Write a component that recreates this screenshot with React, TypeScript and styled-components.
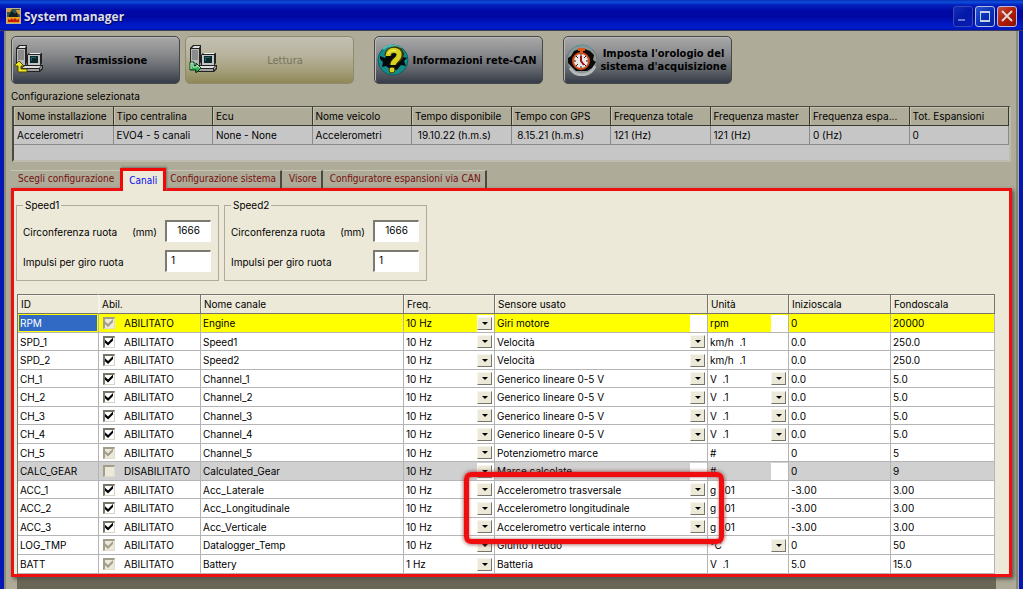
import React from 'react';
import styled, { createGlobalStyle, css } from 'styled-components';

const ui = `Inter, 'Liberation Sans', sans-serif`;
const condensed = `'DejaVu Sans Condensed', 'DejaVu Sans', sans-serif`;

const GlobalStyle = createGlobalStyle`
  * { box-sizing: border-box; }
  body { margin: 0; background: #0a1cae; color: #000; font: 10px/14px ${ui}; }
  button, input, select { font: inherit; color: inherit; margin: 0; }
`;

const Window = styled.main`
  min-height: 100vh;
  display: flex;
  flex-direction: column;
  background: #aeab98;
  border: solid #0318b4;
  border-width: 0 4px;
`;

const TitleBar = styled.header`
  display: flex;
  align-items: center;
  gap: 3px;
  height: 31px;
  margin: 0 -4px;
  padding: 2px 6px 0 6px;
  border-bottom: 1px solid #3b3d5e;
  background: linear-gradient(#0a2cb4 0, #0c50dc 2px, #0420bc 5px, #0008a4 11px, #0008a4 17px, #0018c4 24px, #001cc8 28px, #0010a0 31px);
`;

const Title = styled.h1`
  flex: 1;
  margin: 0;
  padding-top: 2px;
  color: #dcdcec;
  font: bold 12px/18px 'Open Sans', 'Noto Sans', sans-serif;
  text-shadow: 1px 1px 0 #000850;
`;

const Controls = styled.div`
  display: flex;
  gap: 2px;
`;

const ControlButton = styled.button<{ $kind: 'min' | 'max' | 'close' }>`
  display: grid;
  place-items: center;
  width: 20px;
  height: 21px;
  padding: 0;
  border: 1px solid ${p => (p.$kind === 'min' ? '#3848b8' : '#b4bce0')};
  border-radius: 3px;
  background: ${p =>
    p.$kind === 'close'
      ? 'linear-gradient(135deg, #c85038, #b01c08 50%, #901000)'
      : p.$kind === 'max'
        ? 'linear-gradient(135deg, #2c58d0, #0830b8 50%, #0420a0)'
        : 'linear-gradient(135deg, #1030b8, #0418a8 50%, #0820b0)'};
`;

const Client = styled.div`
  flex: 1;
  display: flex;
  flex-direction: column;
  margin-right: 1px;
  padding: 5px 4px 0 5px;
  border: solid #8b8978;
  border-width: 0 2px;
`;

const Toolbar = styled.div`
  display: flex;
  gap: 20px;
`;

const ToolPair = styled.div`
  display: flex;
  gap: 5px;
`;

const ToolButton = styled.button`
  display: flex;
  align-items: center;
  width: 169px;
  height: 48px;
  padding: 0 2px;
  border: 1px solid #46474a;
  border-radius: 5px;
  background: linear-gradient(#a9a9a9, #8b8c8e 35%, #62666c 70%, #363c48);
  font: bold 11px/13px ${condensed};
  box-shadow: inset 1px 1px 0 #b9b9b6;

  &:disabled {
    color: #77735f;
    font-weight: normal;
    border-color: #8f8b6e;
    background: linear-gradient(#c3c0b2, #b7b39c 40%, #a39d78 75%, #8f8857);
    box-shadow: none;
  }
`;

const ToolLabel = styled.span`
  flex: 1;
  text-align: center;
`;

const Caption = styled.h2`
  margin: 5px 0 3px;
  font: 10px/14px ${ui};
`;

const SummaryBox = styled.div`
  height: 56px;
  margin: 0 1px;
  border: solid #4a4a40;
  border-width: 1px 0 0 2px;
  border-right: 2px solid #bdbbae;
  border-bottom: 2px solid #bdbbae;
  background: #c6c6c6;
`;

const SummaryTable = styled.table`
  width: 100%;
  table-layout: fixed;
  border-spacing: 0;

  th, td {
    height: 19px;
    padding: 0 0 0 3px;
    font-weight: normal;
    text-align: left;
    white-space: pre;
    border-right: 1px solid #8a8a8a;
    border-bottom: 1px solid #8a8a8a;
  }
  th {
    background: #aeab98;
    border-color: #38382f;
    box-shadow: inset 1px 1px 0 #c4c2b2;
  }
`;

const Tabs = styled.div`
  display: flex;
  align-items: flex-end;
  height: 26px;
  font: 10px/14px ${condensed};
`;

const Tab = styled.button<{ $divider?: boolean }>`
  height: 18px;
  padding: 0 4px 2px 7px;
  border: 0;
  border-top: 1px solid #c8c6b6;
  border-right: ${p => (p.$divider ? '2px solid #4c4a40' : '0')};
  background: none;
  color: #761010;
  white-space: nowrap;

  &:first-child { padding-right: 6px; }
  &[aria-selected='true'] {
    position: relative;
    height: 23px;
    margin: 0 0 -3px;
    padding: 0 6px;
    border: solid #f00808;
    border-width: 3px 3px 0;
    background: #ece9d8;
    color: #0a0af0;
    box-shadow: 1px -1px 2px #77756a;
    clip-path: inset(-4px -4px 0 -4px);
  }
  &[aria-selected='true'] + & { padding-left: 4px; }
`;

const Panel = styled.section`
  padding: 7px 14px 0 3px;
  border: 3px solid #ee1010;
  background: #ece9d8;
  box-shadow: 2px 2px 4px #55534a;
`;

const SpeedRow = styled.div`
  display: flex;
  gap: 5px;
  margin: 0 0 13px -1px;
`;

const SpeedGroup = styled.fieldset`
  width: 203px;
  margin: 0;
  padding: 8px 7px 8px 6px;
  border: 1px solid #aeac9e;

  legend {
    padding: 0 2px;
    line-height: 14px;
  }
`;

const Field = styled.label`
  display: flex;
  align-items: center;
  height: 22px;

  & + & { margin-top: 8px; }
`;

const FieldText = styled.span<{ $grow?: boolean }>`
  flex: ${p => (p.$grow ? 1 : 'none')};
  padding-top: 2px;
`;

const NumberBox = styled.input<{ $center?: boolean }>`
  width: 46px;
  height: 22px;
  margin-left: 8px;
  padding: 0 4px 3px;
  border: solid;
  border-width: 2px 1px 1px 2px;
  border-color: #7c7a70 #fff #fff #7c7a70;
  border-radius: 0;
  background: #fff;
  text-align: ${p => (p.$center ? 'center' : 'left')};
  outline: none;
`;

type Tint = 'yellow' | 'grey' | undefined;
const tintColor = (t: Tint) => (t === 'yellow' ? '#ffff00' : t === 'grey' ? '#d0d0d0' : '#fff');

const ChannelTable = styled.table`
  width: 100%;
  table-layout: fixed;
  border-spacing: 0;
  border-left: 1px solid #77756a;

  th {
    height: 20px;
    padding: 0 0 0 3px;
    font-weight: normal;
    text-align: left;
    background: #ece9d8;
    border: solid #77756a;
    border-width: 1px 1px 1px 0;
    box-shadow: inset 1px 1px 0 #f6f4ea;
  }
  th:first-child {
    border-right-color: #f4f2e8;
  }
`;

const Row = styled.tr<{ $tint: Tint }>`
  height: 18px;
  &:nth-child(odd), &:last-child { height: 19px; }

  td {
    height: inherit;
    padding: 0;
    line-height: 14px;
    white-space: pre;
    background: ${p => tintColor(p.$tint)};
    border: solid #b4b4b4;
    border-width: 0 1px 1px 0;
  }
`;

const Text = styled.div<{ $selected?: boolean }>`
  padding: 0 0 0 2px;
  ${p =>
    p.$selected &&
    css`
      margin: 0 1px;
      padding: 1px 0 1px 1px;
      background: #316ac5;
      color: #fff;
    `}
`;

const Enable = styled.label`
  display: flex;
  align-items: center;
  gap: 9px;
  padding: 0 0 0 4px;
`;

const Check = styled.input`
  appearance: none;
  width: 12px;
  height: 12px;
  border: solid;
  border-width: 2px 1px 1px 2px;
  border-color: #77756a #d8d5c4 #d8d5c4 #77756a;
  background: #fff;
  color: #000;

  &:disabled {
    background: #ece9d8;
    color: #a19e8c;
    border-color: #a19e8c #e0ddcc #e0ddcc #a19e8c;
  }
  &:checked::after {
    content: '';
    display: block;
    width: 8px;
    height: 8px;
    background: currentColor;
    clip-path: polygon(0 28%, 38% 62%, 100% 0, 100% 38%, 38% 100%, 0 66%);
  }
`;

const Split = styled.div`
  display: grid;
  grid-template-columns: 1fr 17px;
  align-items: center;
  height: 100%;
`;

const Picker = styled.select`
  grid-area: 1 / 1 / 2 / 3;
  appearance: none;
  width: 100%;
  height: 14px;
  padding: 0 17px 0 2px;
  border: 0;
  background: none;
  outline: none;
`;

const Tail = styled.span`
  grid-area: 1 / 2 / 2 / 3;
  display: grid;
  place-items: center start;
  height: 17px;
  background: #fff;
  pointer-events: none;
`;

const Arrow = styled.span`
  display: grid;
  place-items: center;
  width: 15px;
  height: 13px;
  background: #ece9d8;
  border: solid;
  border-width: 1px;
  border-color: #f8f6ec #77756a #77756a #f8f6ec;

  &::after {
    content: '';
    border: solid transparent;
    border-width: 3px 3px 0;
    border-top-color: #000;
  }
`;

const SensorAnchor = styled.div`
  position: relative;
  height: 100%;
`;

const Highlight = styled.div`
  position: absolute;
  z-index: 2;
  top: -9px;
  left: -31px;
  right: -17px;
  height: 72px;
  border: 5px solid #f00d10;
  border-radius: 7px;
  box-shadow: 0 0 4px #8a3030, inset 0 0 3px #a06060;
  pointer-events: none;
`;

const Desktop = styled.div`
  flex: 1;
  min-height: 13px;
  margin: 0 16px 0 6px;
  background: linear-gradient(#55534a, #6a6655 5px);
`;

function AppIcon() {
  return (
    <svg width="15" height="16" viewBox="0 0 15 16" aria-hidden="true">
      <rect width="15" height="16" fill="#b8b090" />
      <rect x="1" y="1" width="13" height="9" fill="#31544c" />
      <path d="M1 1h5l-2 3H1zM10 2h4v5l-3-2z" fill="#d89c30" />
      <path d="M3 7l3-4 3 3 2-2 1 5H3z" fill="#151d20" />
      <rect x="1" y="9" width="13" height="6" fill="#e8a020" />
      <path d="M2 14V11l2 1 2-2 1 2 2-2 2 2 2-1v3z" fill="#c81808" />
    </svg>
  );
}

function ComputerIcon({ down }: { down?: boolean }) {
  return (
    <svg width="31" height="32" viewBox="0 0 31 32" aria-hidden="true">
      <path d="M2 4l3-3h8v17l-2 4H2z" fill="#222" />
      <path d="M3 5h8v16H3z" fill="#b8b8b8" />
      <path d="M4 4l2-2h6l-1 2z" fill="#e0e0e0" />
      <path d="M4 6h6v10H4z" fill="#8b8b8b" />
      <path d="M13 11l2-2h13v10l-2 3H13z" fill="#222" />
      <path d="M14 11h12v10H14z" fill="#c4c4c4" />
      <path d="M15 10h11l1-1h-11z" fill="#eee" />
      <path d="M16 12h8v7h-8z" fill="#0a2a2c" />
      <path d="M17 13h5v1h-4v3h-1z" fill="#1d6265" />
      <path d="M7 24l4-3h18v4l-3 3H7z" fill="#222" />
      <path d="M8 24l3-2h16l-2 2z" fill="#ddd" />
      <path d="M8 25h17v2H8zM26 24l2-2v2l-2 2z" fill="#a0a0a0" />
      {down ? (
        <>
          <path d="M2 18h4v4h2v-3l5 5-5 5v-3H2z" fill="#30b050" stroke="#0c3818" />
          <path d="M3 25v-6h2v4h4v-2l3 3" fill="none" stroke="#c8f0d0" />
        </>
      ) : (
        <path d="M5 17l5 5H7v3h6v3H4v-6H0z" fill="#f0e820" stroke="#4c4808" />
      )}
    </svg>
  );
}

function HelpIcon() {
  return (
    <svg width="32" height="32" viewBox="0 0 32 32" aria-hidden="true">
      <circle cx="16" cy="16" r="15" fill="#128c8c" stroke="#0d5e60" />
      <path d="M3 12l5 2 3-6 9-2 7 3-1 4 4 1-3 3 2 5-5-1-4 5-7-1-4-3-4 1 1-5-3-3z" fill="#050808" />
      <path d="M6 5a15 15 0 0 1 18-1" stroke="#50b8b0" strokeWidth="2" fill="none" />
      <path d="M11 12c0-8 13-8 12-1 0 5-7 5-7 10" stroke="#3c3804" strokeWidth="7" fill="none" />
      <path d="M11 12c0-8 12-7 11-1 0 5-6 5-6 10" stroke="#d8d020" strokeWidth="5" fill="none" />
      <path d="M11 10c1-4 6-4 8-3" stroke="#f4f080" strokeWidth="1" fill="none" />
      <circle cx="15" cy="26" r="3" fill="#d8d020" stroke="#3c3804" />
    </svg>
  );
}

function ClockIcon() {
  return (
    <svg width="32" height="32" viewBox="0 0 32 32" aria-hidden="true">
      <circle cx="16" cy="16" r="15" fill="#8c9496" stroke="#68787a" />
      <path d="M5 6a15 15 0 0 1 21-1" stroke="#57a09c" fill="none" />
      <path d="M4 24a14 14 0 0 0 25-2" stroke="#b4b8b8" strokeWidth="3" fill="none" />
      <path d="M2 14l3-2 3-5 8-3 8 3 4 4-1 5 3 2-4 6-5 3H10l-4-4-4-4z" fill="#0a0808" />
      <path d="M12 4h7v3h-7zM14 7h3v3h-3z" fill="#e05818" />
      <circle cx="15" cy="17" r="8" fill="#e8e8e8" stroke="#d84c18" strokeWidth="2" />
      <path d="M15 10v2M15 22v2M8 17h2M20 17h2M10 12l2 2M20 12l-2 2M10 22l2-2M20 22l-2-2" stroke="#222" />
      <path d="M15 12v5l3 4" stroke="#a01010" strokeWidth="2" fill="none" />
    </svg>
  );
}

const summary: [string, string][] = [
  ['Nome installazione', 'Accelerometri'],
  ['Tipo centralina', 'EVO4 - 5 canali'],
  ['Ecu', 'None - None'],
  ['Nome veicolo', 'Accelerometri'],
  ['Tempo disponibile', ' 19.10.22 (h.m.s)'],
  ['Tempo con GPS', ' 8.15.21 (h.m.s)'],
  ['Frequenza totale', '121 (Hz)'],
  ['Frequenza master', '121 (Hz)'],
  ['Frequenza espa...', '0 (Hz)'],
  ['Tot. Espansioni', '0'],
];

type Channel = {
  id: string;
  name: string;
  sensor: string;
  unit: string;
  min: string;
  max: string;
  freq?: string;
  locked?: boolean;
  off?: boolean;
  pickSensor?: boolean;
  pickUnit?: boolean;
  tint?: Tint;
  mark?: boolean;
};

const generic = { sensor: 'Generico lineare 0-5 V', unit: 'V  .1', min: '0.0', max: '5.0', pickSensor: true, pickUnit: true };
const accel = { unit: 'g  .01', min: '-3.00', max: '3.00', pickSensor: true };

const channels: Channel[] = [
  { id: 'RPM', name: 'Engine', sensor: 'Giri motore', unit: 'rpm', min: '0', max: '20000', locked: true, tint: 'yellow' },
  { id: 'SPD_1', name: 'Speed1', sensor: 'Velocità', unit: 'km/h  .1', min: '0.0', max: '250.0', pickSensor: true },
  { id: 'SPD_2', name: 'Speed2', sensor: 'Velocità', unit: 'km/h  .1', min: '0.0', max: '250.0', pickSensor: true },
  { id: 'CH_1', name: 'Channel_1', ...generic },
  { id: 'CH_2', name: 'Channel_2', ...generic },
  { id: 'CH_3', name: 'Channel_3', ...generic },
  { id: 'CH_4', name: 'Channel_4', ...generic },
  { id: 'CH_5', name: 'Channel_5', sensor: 'Potenziometro marce', unit: '#', min: '0', max: '5', locked: true },
  { id: 'CALC_GEAR', name: 'Calculated_Gear', sensor: 'Marce calcolate', unit: '#', min: '0', max: '9', locked: true, off: true, tint: 'grey' },
  { id: 'ACC_1', name: 'Acc_Laterale', sensor: 'Accelerometro trasversale', mark: true, ...accel },
  { id: 'ACC_2', name: 'Acc_Longitudinale', sensor: 'Accelerometro longitudinale', ...accel },
  { id: 'ACC_3', name: 'Acc_Verticale', sensor: 'Accelerometro verticale interno', ...accel },
  { id: 'LOG_TMP', name: 'Datalogger_Temp', sensor: 'Giunto freddo', unit: '°C', min: '0', max: '50', locked: true, pickUnit: true },
  { id: 'BATT', name: 'Battery', sensor: 'Batteria', unit: 'V  .1', min: '5.0', max: '15.0', freq: '1 Hz', locked: true },
];

const columns: [string, number][] = [
  ['ID', 81], ['Abil.', 102], ['Nome canale', 203], ['Freq.', 91],
  ['Sensore usato', 213], ['Unità', 81], ['Inizioscala', 102], ['Fondoscala', 104],
];

const Col = styled.col<{ $w: number }>`
  width: ${p => p.$w}px;
`;

function ChoiceCell({ value, pick, label }: { value: string; pick?: boolean; label: string }) {
  return (
    <Split>
      {pick ? (
        <Picker aria-label={label} defaultValue={value}>
          <option value={value}>{value.replace(/ /g, '\u00a0')}</option>
        </Picker>
      ) : (
        <Text>{value}</Text>
      )}
      <Tail>{pick && <Arrow />}</Tail>
    </Split>
  );
}

function SpeedSettings({ title }: { title: string }) {
  return (
    <SpeedGroup>
      <legend>{title}</legend>
      <Field>
        <FieldText $grow>Circonferenza ruota</FieldText>
        <FieldText>(mm)</FieldText>
        <NumberBox $center defaultValue="1666" />
      </Field>
      <Field>
        <FieldText $grow>Impulsi per giro ruota</FieldText>
        <NumberBox defaultValue="1" />
      </Field>
    </SpeedGroup>
  );
}

export default function App() {
  return (
    <>
      <GlobalStyle />
      <Window>
        <TitleBar>
          <AppIcon />
          <Title>System manager</Title>
          <Controls>
            <ControlButton $kind="min" aria-label="Riduci">
              <svg width="12" height="12"><path d="M1 10h7" stroke="#6878d0" strokeWidth="2" /></svg>
            </ControlButton>
            <ControlButton $kind="max" aria-label="Ingrandisci">
              <svg width="12" height="12"><path d="M1 2h10M1 11h10" stroke="#c8d0e8" strokeWidth="2" /><path d="M1.5 1v10M10.5 1v10" stroke="#c8d0e8" /></svg>
            </ControlButton>
            <ControlButton $kind="close" aria-label="Chiudi">
              <svg width="12" height="12"><path d="M1 1l10 10M11 1L1 11" stroke="#e0d8d8" strokeWidth="2" /></svg>
            </ControlButton>
          </Controls>
        </TitleBar>
        <Client>
          <Toolbar>
            <ToolPair>
              <ToolButton><ComputerIcon /><ToolLabel>Trasmissione</ToolLabel></ToolButton>
              <ToolButton disabled><ComputerIcon down /><ToolLabel>Lettura</ToolLabel></ToolButton>
            </ToolPair>
            <ToolButton><HelpIcon /><ToolLabel>Informazioni rete-CAN</ToolLabel></ToolButton>
            <ToolButton><ClockIcon /><ToolLabel>Imposta l'orologio del sistema d'acquisizione</ToolLabel></ToolButton>
          </Toolbar>
          <Caption>Configurazione selezionata</Caption>
          <SummaryBox>
            <SummaryTable>
              <thead><tr>{summary.map(([h]) => <th key={h}>{h}</th>)}</tr></thead>
              <tbody><tr>{summary.map(([h, v]) => <td key={h}>{v}</td>)}</tr></tbody>
            </SummaryTable>
          </SummaryBox>
          <Tabs role="tablist">
            <Tab role="tab">Scegli configurazione</Tab>
            <Tab role="tab" aria-selected="true">Canali</Tab>
            <Tab role="tab" $divider>Configurazione sistema</Tab>
            <Tab role="tab" $divider>Visore</Tab>
            <Tab role="tab" $divider>Configuratore espansioni via CAN</Tab>
          </Tabs>
          <Panel>
            <SpeedRow>
              <SpeedSettings title="Speed1" />
              <SpeedSettings title="Speed2" />
            </SpeedRow>
            <ChannelTable>
              <colgroup>{columns.map(([name, w]) => <Col key={name} $w={w} />)}</colgroup>
              <thead><tr>{columns.map(([name]) => <th key={name}>{name}</th>)}</tr></thead>
              <tbody>
                {channels.map(c => (
                  <Row key={c.id} $tint={c.tint}>
                    <td><Text $selected={c.id === 'RPM'}>{c.id}</Text></td>
                    <td>
                      <Enable>
                        <Check type="checkbox" defaultChecked={!c.off} disabled={c.locked} />
                        {c.off ? 'DISABILITATO' : 'ABILITATO'}
                      </Enable>
                    </td>
                    <td><Text>{c.name}</Text></td>
                    <td><ChoiceCell value={c.freq ?? '10 Hz'} pick label={`Freq. ${c.id}`} /></td>
                    <td>
                      <SensorAnchor>
                        <ChoiceCell value={c.sensor} pick={c.pickSensor} label={`Sensore usato ${c.id}`} />
                        {c.mark && <Highlight />}
                      </SensorAnchor>
                    </td>
                    <td><ChoiceCell value={c.unit} pick={c.pickUnit} label={`Unità ${c.id}`} /></td>
                    <td><Text>{c.min}</Text></td>
                    <td><Text>{c.max}</Text></td>
                  </Row>
                ))}
              </tbody>
            </ChannelTable>
          </Panel>
          <Desktop />
        </Client>
      </Window>
    </>
  );
}
